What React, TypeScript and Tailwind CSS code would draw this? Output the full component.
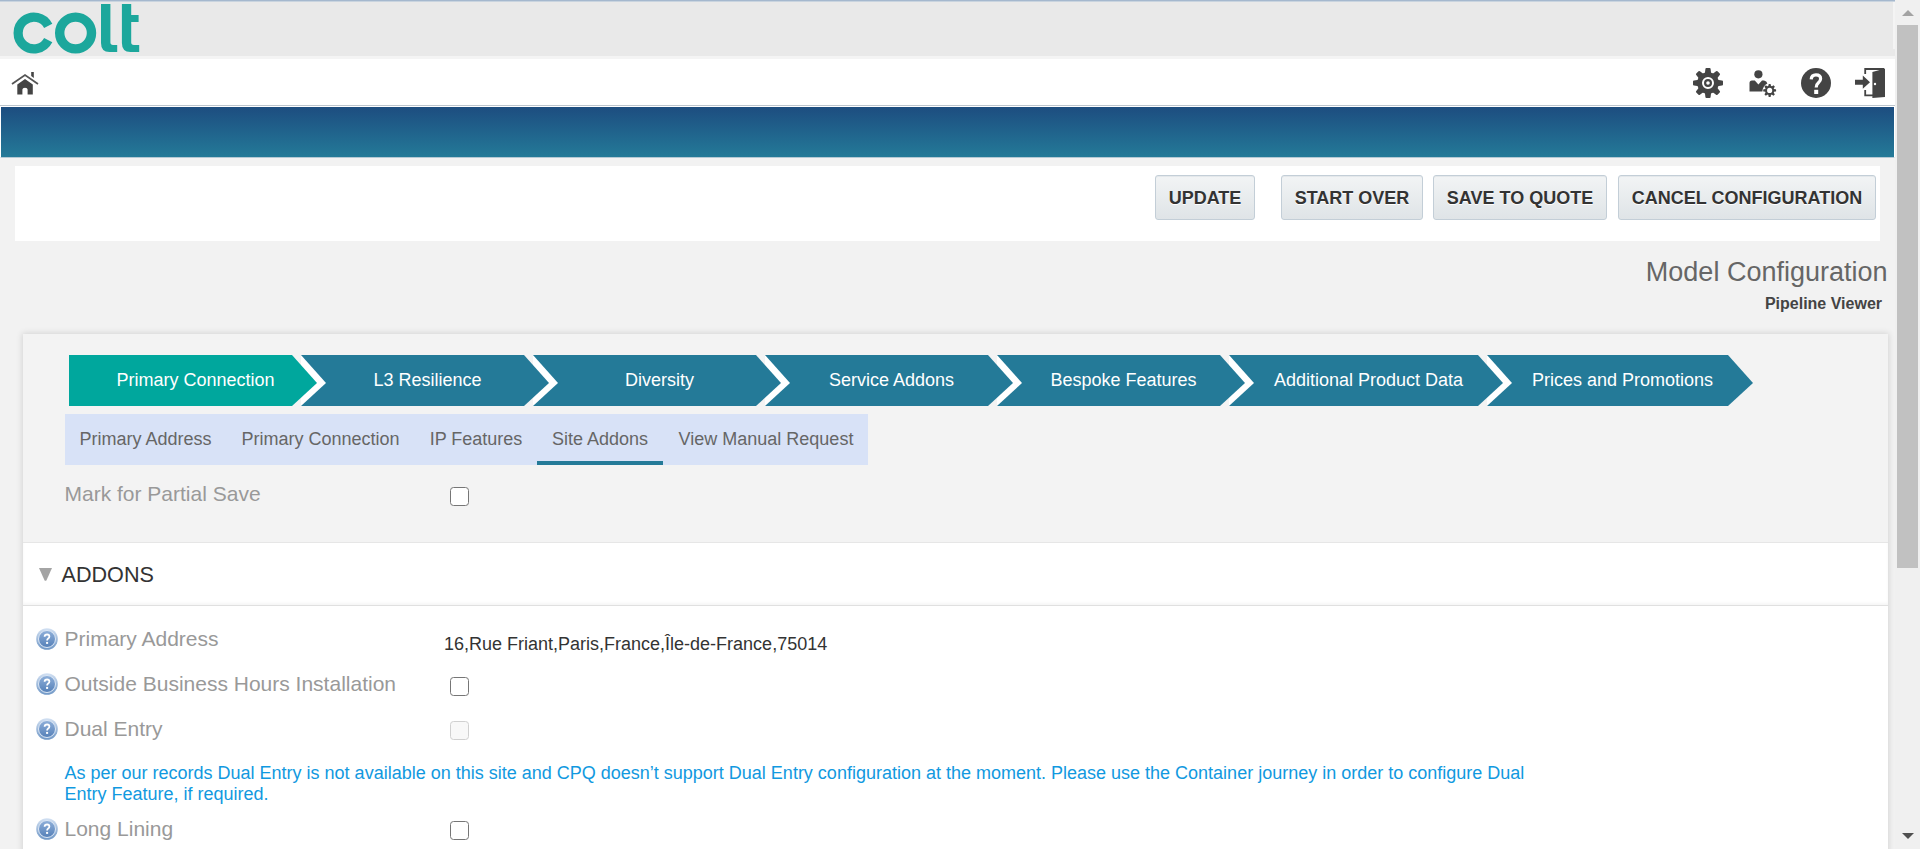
import React from "react";

const STEPS = [
  { label: "Primary Connection", width: "w-[232px]", first: true },
  { label: "L3 Resilience", width: "w-[232px]" },
  { label: "Diversity", width: "w-[232px]" },
  { label: "Service Addons", width: "w-[232px]" },
  { label: "Bespoke Features", width: "w-[232px]" },
  { label: "Additional Product Data", width: "w-[258px]" },
  { label: "Prices and Promotions", width: "w-[250px]", last: true },
];

const TABS = [
  { label: "Primary Address", width: "w-[161px]" },
  { label: "Primary Connection", width: "w-[189px]" },
  { label: "IP Features", width: "w-[122px]" },
  { label: "Site Addons", width: "w-[126px]", active: true },
  { label: "View Manual Request", width: "w-[205px] pl-px" },
];

function Logo() {
  return (
    <svg width="141" height="56" viewBox="0 0 141 56" fill="none" stroke="#1ca79c">
      <path d="M48.2 25.8 A15.9 15.9 0 1 0 48.2 40.2" strokeWidth="9.2" />
      <circle cx="75.6" cy="33" r="15.9" strokeWidth="9.4" />
      <g fill="#1ca79c" stroke="none">
        <path d="M101 4 H110.4 V42.6 Q110.4 45 113 45 H117.2 V52 H109.5 Q101 52 101 43z" />
        <path d="M121.9 4 H131.2 V15 H138.6 V22 H131.2 V42.6 Q131.2 45 133.8 45 H139.2 V52 H130.4 Q121.9 52 121.9 43z" />
      </g>
    </svg>
  );
}

function HomeIcon() {
  return (
    <svg width="28" height="26" viewBox="0 0 28 26" fill="#444">
      <path d="M1 13 L14 4 L27 13" fill="none" stroke="#555" strokeWidth="1.8" />
      <path d="M20.2 1 h2.6 v6 l-2.6 -2z" />
      <path d="M6.3 13.4 L14 8 L21.8 13.4 V23.6 H16.6 V18.6 q0 -1.8 -2.6 -1.8 t-2.6 1.8 V23.6 H6.3z" />
    </svg>
  );
}

const TEETH = [0, 45, 90, 135, 180, 225, 270, 315];

function GearShape({ ring }: { ring: boolean }) {
  return (
    <g>
      {TEETH.map((a) => (
        <path key={a} d="M12.4 1 q0 -1 1 -1 h3.2 q1 0 1 1 l.6 5 h-6.4z" fill="#444" transform={`rotate(${a} 15 15)`} />
      ))}
      <circle cx="15" cy="15" r="8.4" fill="none" stroke="#444" strokeWidth="4.8" />
      {ring && <circle cx="15" cy="15" r="2.9" fill="none" stroke="#444" strokeWidth="2.2" />}
    </g>
  );
}

function GearIcon() {
  return (
    <svg width="30" height="30" viewBox="0 0 30 30">
      <GearShape ring />
    </svg>
  );
}

function UserGearIcon() {
  return (
    <svg width="28" height="28" viewBox="0 0 28 28">
      <circle cx="9.4" cy="4.3" r="4.1" fill="#444" />
      <path d="M0.5 21.5 V13 Q0.5 10.4 3 10.4 H5.8 L9.4 14.4 L13 10.4 H15 Q17.8 10.8 18.4 13.6 Q14 15.4 13.4 21.5z" fill="#444" />
      <g transform="translate(14.2 14) scale(.43)">
        <GearShape ring={false} />
      </g>
    </svg>
  );
}

function HelpIcon() {
  return (
    <svg width="30" height="30" viewBox="0 0 30 30">
      <circle cx="15" cy="15" r="15" fill="#444" />
      <path d="M10.2 11.4 Q10.4 6.9 15 6.9 Q19.6 6.9 19.6 10.8 Q19.6 12.9 17.4 14.8 Q15.2 16.6 15.2 19.6" fill="none" stroke="#fff" strokeWidth="3.2" />
      <rect x="13.2" y="21.8" width="4" height="4.2" fill="#fff" />
    </svg>
  );
}

function ExitIcon() {
  return (
    <svg width="30" height="30" viewBox="0 0 30 30" fill="#444">
      <path d="M0 11.8 H7.8 V7.4 L15 14.2 L7.8 20.8 V16.8 H0z" />
      <path d="M10.2 6 V1 H29 M10.2 22 V27.4 H18" fill="none" stroke="#444" strokeWidth="1.8" />
      <path d="M17.4 4 L30 0.6 V29 L17.4 30z" />
      <circle cx="20" cy="16" r="1.2" fill="#fff" />
    </svg>
  );
}

function InfoBadge() {
  return (
    <svg width="22" height="22" viewBox="0 0 22 22" className="shrink-0">
      <defs>
        <linearGradient id="rim" x1="0" y1="0" x2="0" y2="1">
          <stop offset="0" stopColor="#d3e1f3" />
          <stop offset="1" stopColor="#6f97c6" />
        </linearGradient>
        <linearGradient id="core" x1="0" y1="0" x2="0" y2="1">
          <stop offset="0" stopColor="#8fb0da" />
          <stop offset="1" stopColor="#5580b8" />
        </linearGradient>
      </defs>
      <circle cx="11" cy="11" r="10.8" fill="url(#rim)" />
      <circle cx="11" cy="11" r="8.5" fill="url(#core)" stroke="#dce7f5" strokeWidth="1" />
      <path d="M8.6 8.8 Q8.7 6.5 11.1 6.5 Q13.4 6.5 13.4 8.6 Q13.4 9.8 12.2 10.6 Q11.1 11.3 11.1 12.6" fill="none" stroke="#fff" strokeWidth="1.8" />
      <rect x="10.1" y="13.9" width="2" height="2" fill="#fff" />
    </svg>
  );
}

function Checkbox({ disabled = false }: { disabled?: boolean }) {
  return (
    <span
      role="checkbox"
      aria-checked="false"
      className={
        disabled
          ? "block size-[19px] rounded-[3.5px] border border-[#d0d0d0] bg-[#f8f8f8]"
          : "block size-[19px] rounded-[3.5px] border border-[#767676] bg-white"
      }
    />
  );
}

function ActionButton({ label, className }: { label: string; className: string }) {
  return (
    <button
      className={`h-[45px] rounded-[3px] border border-[#c3ced7] bg-linear-to-b from-[#f2f4f5] to-[#dfe4e7] text-[18px] leading-none font-bold whitespace-nowrap text-[#333] shadow-[inset_0_1px_0_#e4e8eb] [text-shadow:0_1px_0_#fff] ${className}`}
    >
      {label}
    </button>
  );
}

function Step({ label, width, first, last }: { label: string; width: string; first?: boolean; last?: boolean }) {
  return (
    <div className={`relative flex h-[51px] shrink-0 ${width}`}>
      <div
        className={`mr-[9px] flex h-[51px] grow items-center justify-center pl-[30px] text-[18px] text-white ${first ? "bg-[#00a79d]" : "bg-[#247a98]"}`}
      >
        <span className="pb-px whitespace-nowrap">{label}</span>
      </div>
      <svg className="absolute top-0 right-[-25px] z-10" width="34" height="51" viewBox="0 0 34 51">
        {!last && <path d="M9 0 L34 28 L9 51z" fill="#fff" />}
        <path d="M0 0 L25 28 L0 51z" fill={first ? "#00a79d" : "#247a98"} />
      </svg>
    </div>
  );
}

function FieldRow({ label, className, children }: { label: string; className: string; children: React.ReactNode }) {
  return (
    <div className={`flex items-start pl-[13px] ${className}`}>
      <div className="pt-[11px]">
        <InfoBadge />
      </div>
      <div className="ml-[6px] w-[380px] shrink-0 pt-[10px] pl-[0.5px] text-[21px] leading-[24px] text-[#999]">{label}</div>
      {children}
    </div>
  );
}

export default function App() {
  return (
    <div className="flex h-[849px] w-[1920px] overflow-hidden bg-[#f2f2f2] font-['Liberation_Sans',Arial,sans-serif] text-[#333]">
      <main className="flex h-full w-[1895px] shrink-0 flex-col overflow-hidden">
        <header className="flex h-[59px] shrink-0 justify-between border-t border-b-[3px] border-t-[#a5b8ce] border-b-[#f4f4f4] bg-[#e9e9e9] shadow-[inset_0_1px_0_#c9d4df]">
          <div className="-mt-px h-[56px]">
            <Logo />
          </div>
          <div className="mt-px h-[47px] w-[2px] bg-[#f4f4f4]" />
        </header>
        <nav className="flex h-[47px] shrink-0 items-start justify-between border-b border-[#bcc5cd] bg-white pr-[10px] pl-[11px]">
          <div className="pt-[12px]">
            <HomeIcon />
          </div>
          <div className="flex gap-[24px] pt-[9px]">
            <GearIcon />
            <div className="flex w-[30px] justify-end pt-[2px]">
              <UserGearIcon />
            </div>
            <HelpIcon />
            <ExitIcon />
          </div>
        </nav>
        <div className="h-[52px] shrink-0 border-x border-t border-b border-x-white border-t-white border-b-[#b4c9d4] bg-linear-to-b from-[#1d4d80] to-[#247a98]" />
        <div className="mx-[15px] mt-[8px] flex h-[75px] shrink-0 items-start justify-end bg-white pt-[9px] pr-[4px]">
          <ActionButton label="UPDATE" className="w-[100px]" />
          <ActionButton label="START OVER" className="ml-[26px] w-[142px]" />
          <ActionButton label="SAVE TO QUOTE" className="ml-[10px] w-[174px]" />
          <ActionButton label="CANCEL CONFIGURATION" className="ml-[11px] w-[258px]" />
        </div>
        <div className="flex h-[93px] shrink-0 flex-col items-end pt-[15px] pr-[7.5px]">
          <h1 className="text-[27px] leading-[32px] text-[#666]">Model Configuration</h1>
          <span className="mt-[6px] pr-[5.5px] text-[16px] leading-[20px] font-bold text-[#444]">Pipeline Viewer</span>
        </div>
        <section className="mr-[7px] ml-[23px] flex h-[540px] shrink-0 flex-col shadow-[0_0_6px_1px_rgba(0,0,0,0.12)]">
          <div className="h-[209px] shrink-0 border-b border-[#e6e6e6] bg-[#f3f3f3] pt-[21px]">
            <div className="flex pl-[46px]">
              {STEPS.map((s) => (
                <Step key={s.label} {...s} />
              ))}
            </div>
            <div className="mt-[8px] ml-[42px] flex h-[51px] w-[803px] bg-[#d8e2f7] text-[18px] text-[#666]">
              {TABS.map((t) => (
                <div
                  key={t.label}
                  className={`flex h-full shrink-0 justify-center border-b-4 pt-[15px] leading-[21px] whitespace-nowrap ${t.width} ${t.active ? "border-[#247a98]" : "border-transparent"}`}
                >
                  {t.label}
                </div>
              ))}
            </div>
            <div className="mt-[17px] flex pl-[41.5px]">
              <div className="w-[385.5px] text-[21px] leading-[24px] text-[#999]">Mark for Partial Save</div>
              <div className="pt-[5px]">
                <Checkbox />
              </div>
            </div>
          </div>
          <div className="flex h-[63px] shrink-0 items-start border-b border-[#e0e0e0] bg-white pl-[16px] shadow-[inset_0_-2px_3px_rgba(0,0,0,0.04)]">
            <svg className="mt-[25px] shrink-0" width="13" height="13" viewBox="0 0 13 13">
              <path d="M0 0 H13 L7.4 12.4 Q6.5 13 5.6 12.4z" fill="#a4a4a4" />
            </svg>
            <h2 className="ml-[9.5px] pt-[18px] text-[21.6px] leading-[27px] text-[#333]">ADDONS</h2>
          </div>
          <div className="grow bg-white pt-[11px]">
            <FieldRow label="Primary Address" className="h-[45px]">
              <div className="pt-[17px] text-[18px] leading-[21px]">16,Rue Friant,Paris,France,Île-de-France,75014</div>
            </FieldRow>
            <FieldRow label="Outside Business Hours Installation" className="h-[45px]">
              <div className="pt-[15px] pl-[6px]">
                <Checkbox />
              </div>
            </FieldRow>
            <FieldRow label="Dual Entry" className="h-[45px]">
              <div className="pt-[14px] pl-[6px]">
                <Checkbox disabled />
              </div>
            </FieldRow>
            <p className="ml-[41.5px] h-[55px] w-[1480px] pt-[11px] text-[18px] leading-[21px] text-[#1199e0]">
              As per our records Dual Entry is not available on this site and CPQ doesn’t support Dual Entry configuration at the moment. Please use the Container journey in order to configure Dual
              Entry Feature, if required.
            </p>
            <FieldRow label="Long Lining" className="h-[45px]">
              <div className="pt-[14px] pl-[6px]">
                <Checkbox />
              </div>
            </FieldRow>
          </div>
        </section>
      </main>
      <aside className="flex h-full w-[25px] shrink-0 flex-col items-center bg-[#f0f0f0]">
        <svg className="mt-[10px] shrink-0" width="12" height="6" viewBox="0 0 12 6">
          <path d="M6 0 L12 6 H0z" fill="#a3a3a3" />
        </svg>
        <div className="mt-[9px] h-[543px] w-[21px] shrink-0 bg-[#c1c1c1]" />
        <svg className="mt-auto mb-[10px] shrink-0" width="12" height="6" viewBox="0 0 12 6">
          <path d="M6 6 L12 0 H0z" fill="#505050" />
        </svg>
      </aside>
    </div>
  );
}
